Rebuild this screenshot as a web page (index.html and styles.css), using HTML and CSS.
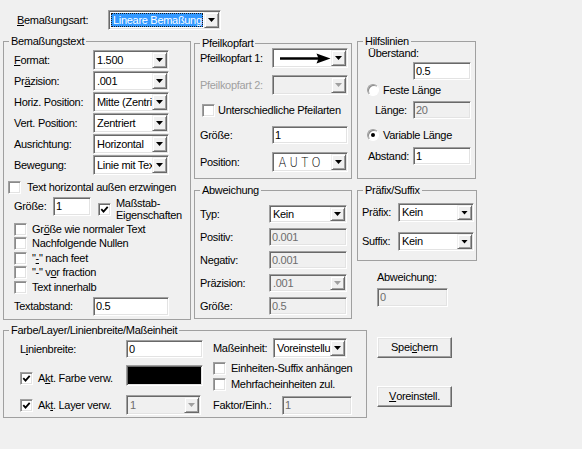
FILE: index.html
```html
<!DOCTYPE html>
<html lang="de">
<head>
<meta charset="utf-8">
<title>Bemaßung</title>
<link rel="stylesheet" href="styles.css">
</head>
<body>
<div class="dlg">
  <div class="top">
    <span class="top-lbl"><u>B</u>emaßungsart:</span>
    <div class="combo combo-top"><span class="v"><span class="sel">Lineare Bemaßung</span></span><span class="dd"></span></div>
  </div>

  <div class="main">
    <fieldset class="g-text">
      <legend>Bemaßungstext</legend>
      <div class="f-text">
        <span><u>F</u>ormat:</span><div class="combo"><span class="v">1.500</span><span class="dd"></span></div>
        <span>Pr<u>ä</u>zision:</span><div class="combo"><span class="v">.001</span><span class="dd"></span></div>
        <span>Horiz. Position:</span><div class="combo"><span class="v">Mitte (Zentriert)</span><span class="dd"></span></div>
        <span>Vert. Position:</span><div class="combo"><span class="v">Zentriert</span><span class="dd"></span></div>
        <span>Ausrichtung:</span><div class="combo"><span class="v">Horizontal</span><span class="dd"></span></div>
        <span>Bewegung:</span><div class="combo"><span class="v">Linie mit Text</span><span class="dd"></span></div>
      </div>
      <label class="chk chk-force"><span class="cb"></span>Text horizontal außen erzwingen</label>
      <div class="size-row">
        <span class="size-lbl">Größe:</span>
        <div class="edit size-edit">1</div>
        <span class="cb size-cb"><svg width="9" height="9" viewBox="0 0 9 9"><path d="M1.3 4.2 L3.5 6.6 L7.7 1.8" fill="none" stroke="#000" stroke-width="1.8"/></svg></span>
        <span class="two">Maßstab-<br>Eigenschaften</span>
      </div>
      <div class="chk-list">
        <label class="chk"><span class="cb"></span>Gr<u>ö</u>ße wie normaler Text</label>
        <label class="chk"><span class="cb"></span>Nachfolgende Nullen</label>
        <label class="chk"><span class="cb"></span>"<u>-</u>" nach feet</label>
        <label class="chk"><span class="cb"></span>"-" v<u>o</u>r fraction</label>
        <label class="chk"><span class="cb"></span>Text innerhalb</label>
      </div>
      <div class="f-text f-abst">
        <span>Textabstand:</span><div class="edit">0.5</div>
      </div>
    </fieldset>

    <div class="col2">
      <fieldset class="g-arrow">
        <legend>Pfeilkopfart</legend>
        <div class="r a1"><span class="l">Pfeilkopfart 1:</span>
          <div class="combo"><span class="v"><svg class="arrow" width="51" height="11" viewBox="0 0 51 11"><line x1="0" y1="5.5" x2="39" y2="5.5" stroke="#000" stroke-width="2.4"/><polygon points="36.5,0.5 50.5,5.5 36.5,10.5 38.5,5.5" fill="#000"/></svg></span><span class="dd"></span></div>
        </div>
        <div class="r a2"><span class="l off">Pfeilkopfart 2:</span>
          <div class="combo dis"><span class="v"></span><span class="dd"></span></div>
        </div>
        <label class="chk a3"><span class="cb"></span>Unterschiedliche Pfeilarten</label>
        <div class="r a4"><span class="l">Größe:</span><div class="edit">1</div></div>
        <div class="r a5"><span class="l">Position:</span>
          <div class="combo"><span class="v"><span class="auto">AUTO</span></span><span class="dd"></span></div>
        </div>
      </fieldset>

      <fieldset class="g-dev">
        <legend>Abweichung</legend>
        <div class="r d1"><span class="l">Typ:</span><div class="combo"><span class="v">Kein</span><span class="dd"></span></div></div>
        <div class="r"><span class="l">Positiv:</span><div class="edit dis">0.001</div></div>
        <div class="r"><span class="l">Negativ:</span><div class="edit dis">0.001</div></div>
        <div class="r"><span class="l">Präzision:</span><div class="combo dis"><span class="v">.001</span><span class="dd"></span></div></div>
        <div class="r"><span class="l">Größe:</span><div class="edit dis">0.5</div></div>
      </fieldset>
    </div>

    <div class="col3">
      <fieldset class="g-help">
        <legend>Hilfslinien</legend>
        <div class="h-lbl">Überstand:</div>
        <div class="edit h-e1">0.5</div>
        <label class="rad h-r1"><span class="rb"></span>Feste Länge</label>
        <div class="h-r2"><span class="l">Länge:</span><div class="edit dis">20</div></div>
        <label class="rad h-r3"><span class="rb on"></span>Variable Länge</label>
        <div class="h-r4"><span class="l">Abstand:</span><div class="edit">1</div></div>
      </fieldset>

      <fieldset class="g-pre">
        <legend>Präfix/Suffix</legend>
        <div class="p-r"><span class="l">Präfix:</span><div class="combo"><span class="v">Kein</span><span class="dd"></span></div></div>
        <div class="p-r p-r2"><span class="l">Suffix:</span><div class="combo"><span class="v">Kein</span><span class="dd"></span></div></div>
      </fieldset>

      <div class="dev-lbl">Abweichung:</div>
      <div class="edit dis dev-edit">0</div>
    </div>
  </div>

  <div class="bottom">
    <fieldset class="g-col">
      <legend>Farbe/Layer/Linienbreite/Maßeinheit</legend>
      <div class="cols">
        <div class="c-left">
          <div class="b-r b1"><span class="l">L<u>i</u>nienbreite:</span><div class="edit">0</div></div>
          <div class="b-r b2"><label class="chk"><span class="cb"><svg width="9" height="9" viewBox="0 0 9 9"><path d="M1.3 4.2 L3.5 6.6 L7.7 1.8" fill="none" stroke="#000" stroke-width="1.8"/></svg></span>A<u>k</u>t. Farbe verw.</label><div class="edit color"></div></div>
          <div class="b-r b3"><label class="chk"><span class="cb"><svg width="9" height="9" viewBox="0 0 9 9"><path d="M1.3 4.2 L3.5 6.6 L7.7 1.8" fill="none" stroke="#000" stroke-width="1.8"/></svg></span>Ak<u>t</u>. Layer verw.</label><div class="combo dis"><span class="v">1</span><span class="dd"></span></div></div>
        </div>
        <div class="c-right">
          <div class="b-r m1"><span class="l">Maßeinheit:</span><div class="combo"><span class="v">Voreinstellung</span><span class="dd"></span></div></div>
          <label class="chk m2"><span class="cb"></span>Einheiten-Suffix anhängen</label>
          <label class="chk m3"><span class="cb"></span>Mehrfacheinheiten zul.</label>
          <div class="b-r m4"><span class="l">Faktor/Einh.:</span><div class="edit dis">1</div></div>
        </div>
      </div>
    </fieldset>
    <div class="btns">
      <div class="btn btn1">Spei<u>c</u>hern</div>
      <div class="btn btn2"><u>V</u>oreinstell.</div>
    </div>
  </div>
</div>
</body>
</html>
```

FILE: styles.css
```css
* { box-sizing: border-box; }
html, body { margin: 0; padding: 0; }
body {
  width: 582px; height: 449px; overflow: hidden;
  background: #f0f0f0; color: #000;
  font: 11px/13px "Liberation Sans", Arial, sans-serif;
  letter-spacing: -0.3px;
}
u { text-decoration: underline; text-underline-offset: 1px; }

.dlg { padding-top: 10px; }

/* generic controls */
.combo {
  display: flex; flex: none; height: 20px; padding: 1px;
  background: #fff;
  border: 1px solid; border-color: #a0a0a0 #fff #fff #a0a0a0;
  box-shadow: inset 1px 1px 0 #696969, inset -1px -1px 0 #e3e3e3;
}
.combo .v {
  flex: 1; min-width: 0; padding-left: 2px;
  display: flex; align-items: center;
  overflow: hidden; white-space: nowrap;
}
.combo .dd {
  flex: none; width: 15px;
  background: #f0f0f0;
  border: 1px solid; border-color: #f0f0f0 #696969 #696969 #f0f0f0;
  box-shadow: inset 1px 1px 0 #fff, inset -1px -1px 0 #a0a0a0;
  display: flex; align-items: center; justify-content: center;
}
.combo .dd::after {
  content: ""; width: 7px; height: 4px; background: #000;
  clip-path: polygon(0 0, 100% 0, 50% 100%);
}
.combo.dis { background: #f0f0f0; }
.combo.dis .v { color: #6d6d6d; }
.combo.dis .dd::after { background: #a0a0a0; }

.edit {
  flex: none; height: 18px; padding: 0 2px;
  display: flex; align-items: center;
  white-space: nowrap; overflow: hidden;
  background: #fff;
  border: 1px solid; border-color: #a0a0a0 #fff #fff #a0a0a0;
  box-shadow: inset 1px 1px 0 #696969, inset -1px -1px 0 #e3e3e3;
}
.edit.dis { background: #f0f0f0; color: #6d6d6d; }

.chk { display: flex; align-items: center; height: 15px; white-space: nowrap; }
.cb {
  flex: none; width: 13px; height: 13px; margin-right: 5px;
  background: #fff;
  border: 1px solid; border-color: #a0a0a0 #fff #fff #a0a0a0;
  box-shadow: inset 1px 1px 0 #8a8a8a, inset -1px -1px 0 #e3e3e3;
  display: flex; align-items: center; justify-content: center;
}
.cb svg { display: block; }

.rad { display: flex; align-items: center; height: 14px; white-space: nowrap; }
.rb {
  flex: none; width: 12px; height: 12px; margin-right: 4px; border-radius: 50%;
  background: #fff;
  border: 1px solid; border-color: #a0a0a0 #fff #fff #a0a0a0;
  box-shadow: inset 1px 1px 0 #8a8a8a;
  display: flex; align-items: center; justify-content: center;
}
.rb.on::after { content: ""; width: 4px; height: 4px; border-radius: 50%; background: #000; }

.btn {
  width: 75px; height: 21px;
  background: #f0f0f0;
  border: 1px solid; border-color: #fff #696969 #696969 #fff;
  box-shadow: inset -1px -1px 0 #a0a0a0, inset 1px 1px 0 #e3e3e3;
  display: flex; align-items: center; justify-content: center;
}

fieldset { margin: 0; padding: 0; border: 1px solid #a0a0a0; min-width: 0; }
legend { padding: 0 2px; margin-left: 5px; line-height: 13px; }

.l { flex: none; white-space: nowrap; }
.off { color: #a0a0a0; }

/* top row */
.top { display: flex; align-items: center; height: 20px; margin-left: 17px; }
.top-lbl { width: 91px; }
.combo-top { width: 113px; }
.combo-top .v { padding: 1px; }
.sel {
  display: flex; align-items: center; width: 100%; height: 100%;
  padding-left: 2px;
  background: #3399ff; color: #fff;
  outline: 1px dotted #1a1a1a; outline-offset: -1px;
}

/* main area */
.main { display: flex; align-items: flex-start; margin: 5px 0 0 3px; }

.g-text { width: 188px; height: 285px; }
.f-text {
  display: grid; grid-template-columns: 79px 76px;
  grid-auto-rows: 20px; row-gap: 1px; align-items: center;
  margin: 2px 0 0 10px;
}
.chk-force { margin: 5px 0 0 4px; }
.chk-force .cb { margin-right: 6px; }
.size-row { display: flex; align-items: flex-start; margin: 2px 0 0 10px; }
.size-lbl { width: 39px; line-height: 19px; }
.size-edit { width: 38px; height: 19px; }
.size-cb { margin: 6px 5px 0 7px; box-shadow: inset 1px 1px 0 #696969, inset -1px -1px 0 #e3e3e3; }
.two { line-height: 12px; }
.chk-list { margin: 1px 0 0 10px; }
.chk-list .chk { height: 14.5px; }
.f-abst { margin-top: 2px; grid-auto-rows: 19px; }
.f-abst .edit { height: 19px; }

.col2 { display: flex; flex-direction: column; width: 158px; margin-left: 3px; }
.g-arrow { height: 142px; margin-top: 2px; }
.g-arrow .r { display: flex; align-items: center; margin-left: 5px; }
.g-arrow .l { width: 72px; }
.g-arrow .combo, .g-arrow .edit { width: 76px; }
.a1 { margin-top: -2px; }
.a2 { margin-top: 7px; }
.a3 { margin: 8px 0 0 7px; }
.a3 .cb { margin-right: 3px; }
.a4 { margin-top: 8px; }
.a5 { margin-top: 8px; }
.arrow { display: block; margin-left: 4px; }
.auto {
  font: 200 14px/16px "DejaVu Sans", "Liberation Sans", sans-serif;
  transform: scaleX(0.82); transform-origin: left center;
  letter-spacing: 4px; color: #000; padding-left: 3px;
}

.g-dev { height: 135px; margin-top: 5px; }
.g-dev .r { display: flex; align-items: center; margin: 5px 0 0 5px; }
.g-dev .d1 { margin-top: 8px; }
.g-dev .l { width: 69px; }
.g-dev .combo, .g-dev .edit { width: 78px; height: 18px; }

.col3 { display: flex; flex-direction: column; width: 120px; margin-left: 5px; }
.g-help { width: 119px; height: 144px; }
.g-help .edit { width: 58px; }
.h-lbl { margin: -1px 0 0 10px; }
.h-e1 { margin: 2px 0 0 55px; }
.h-r1 { margin: 3px 0 0 9px; }
.h-r2 { display: flex; align-items: center; margin: 4px 0 0 17px; }
.h-r2 .l { width: 38px; }
.h-r3 { margin: 9px 0 0 9px; }
.h-r4 { display: flex; align-items: center; margin: 5px 0 0 10px; }
.h-r4 .l { width: 45px; }

.g-pre { height: 77px; margin-top: 5px; }
.p-r { display: flex; align-items: center; margin: 6px 0 0 4px; }
.p-r2 { margin-top: 10px; }
.p-r .l { width: 36px; }
.p-r .combo { width: 76px; height: 19px; }
.dev-lbl { margin: 10px 0 0 20px; }
.dev-edit { width: 71px; height: 19px; margin: 4px 0 0 20px; }

/* bottom area */
.bottom { display: flex; align-items: flex-start; margin: 4px 0 0 3px; }
.g-col { width: 364px; height: 94px; }
.cols { display: flex; }
.b-r { display: flex; align-items: center; }
.c-left { width: 183px; margin-left: 16px; }
.c-left .l, .c-left .chk { width: 106px; flex: none; }
.c-left .edit { width: 77px; }
.c-left .combo { width: 75px; }
.b1 { margin-top: 3px; }
.b2 { margin-top: 7px; }
.b2 .chk { margin-top: 5px; }
.b3 { margin-top: 9px; }
.color { height: 21px; background: #000; }

.c-right { width: 139px; margin-left: 10px; }
.m1 { margin-top: 1px; }
.m1 .l { width: 60px; }
.m1 .combo { width: 74px; }
.m2 { margin-top: 3px; }
.m3 { margin-top: 1px; }
.m4 { margin-top: 4px; }
.m4 .l { width: 69px; }
.m4 .edit { width: 70px; height: 19px; }

.btns { display: flex; flex-direction: column; margin-left: 10px; }
.btn1 { margin-top: 13px; }
.btn2 { margin-top: 28px; }
```
